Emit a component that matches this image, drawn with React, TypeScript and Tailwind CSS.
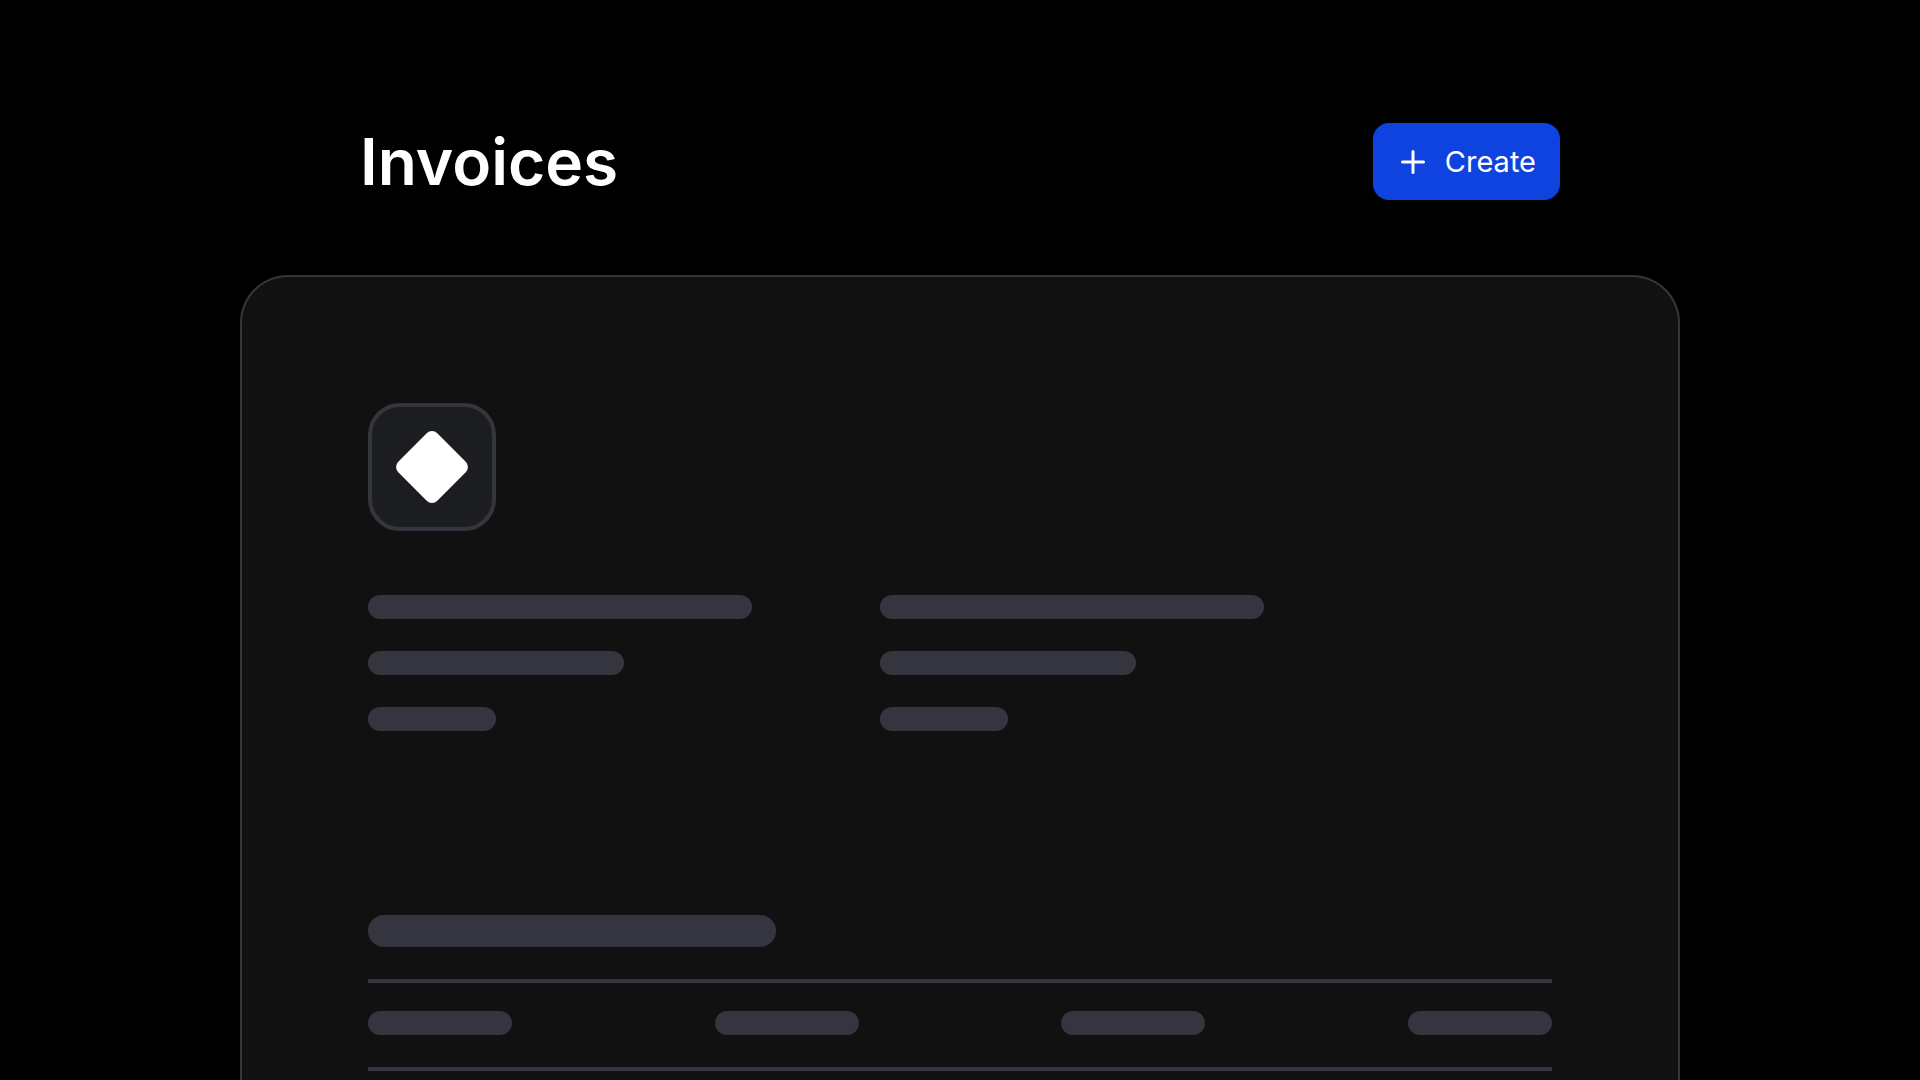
import { Plus } from "lucide-react";
import clsx from "clsx";

const detailColumns = ["sender", "recipient"];
const tableColumns = ["description", "quantity", "price", "total"];

function Bar({ className }: { className: string }) {
  return <div className={clsx("rounded-full bg-[#35353f]", className)} />;
}

function Logo() {
  return (
    <div className="flex size-32 items-center justify-center rounded-[32px] border-4 border-[#35353f] bg-[#1c1d21]">
      <svg viewBox="0 0 72 72" className="size-18" fill="white" aria-hidden>
        <rect x="8.4" y="8.4" width="55.2" height="55.2" rx="7.5" transform="rotate(45 36 36)" />
      </svg>
    </div>
  );
}

function InvoiceCard() {
  return (
    <section
      aria-label="Invoice"
      className="mx-auto w-full max-w-[1440px] shrink-0 rounded-[48px] bg-[#111111] p-32 ring-2 ring-inset ring-[#35353f]"
    >
      <Logo />

      <div className="mt-16 flex gap-32">
        {detailColumns.map((column) => (
          <div key={column} className="flex w-96 flex-col gap-8">
            <Bar className="h-6 w-full" />
            <Bar className="h-6 w-2/3" />
            <Bar className="h-6 w-1/3" />
          </div>
        ))}
      </div>

      <Bar className="mt-46 h-8 w-102" />

      <div className="mt-8 flex justify-between border-y-4 border-[#35353f] pt-7 pb-8">
        {tableColumns.map((column) => (
          <Bar key={column} className="h-6 w-36" />
        ))}
      </div>
    </section>
  );
}

export default function App() {
  return (
    <main className="flex h-screen flex-col overflow-hidden bg-black font-['Inter',sans-serif] text-white">
      <header className="mx-auto flex w-full max-w-[1200px] shrink-0 items-center justify-between pt-[123px] pb-[75px]">
        <h1 className="text-[64px] leading-[76px] font-semibold">Invoices</h1>
        <button
          type="button"
          className="flex h-[77px] items-center gap-3.5 rounded-2xl bg-[#0f43df] pr-6 pl-[22px] text-[29px] leading-9"
        >
          <Plus className="size-9" strokeWidth={2} aria-hidden />
          Create
        </button>
      </header>

      <InvoiceCard />
    </main>
  );
}
